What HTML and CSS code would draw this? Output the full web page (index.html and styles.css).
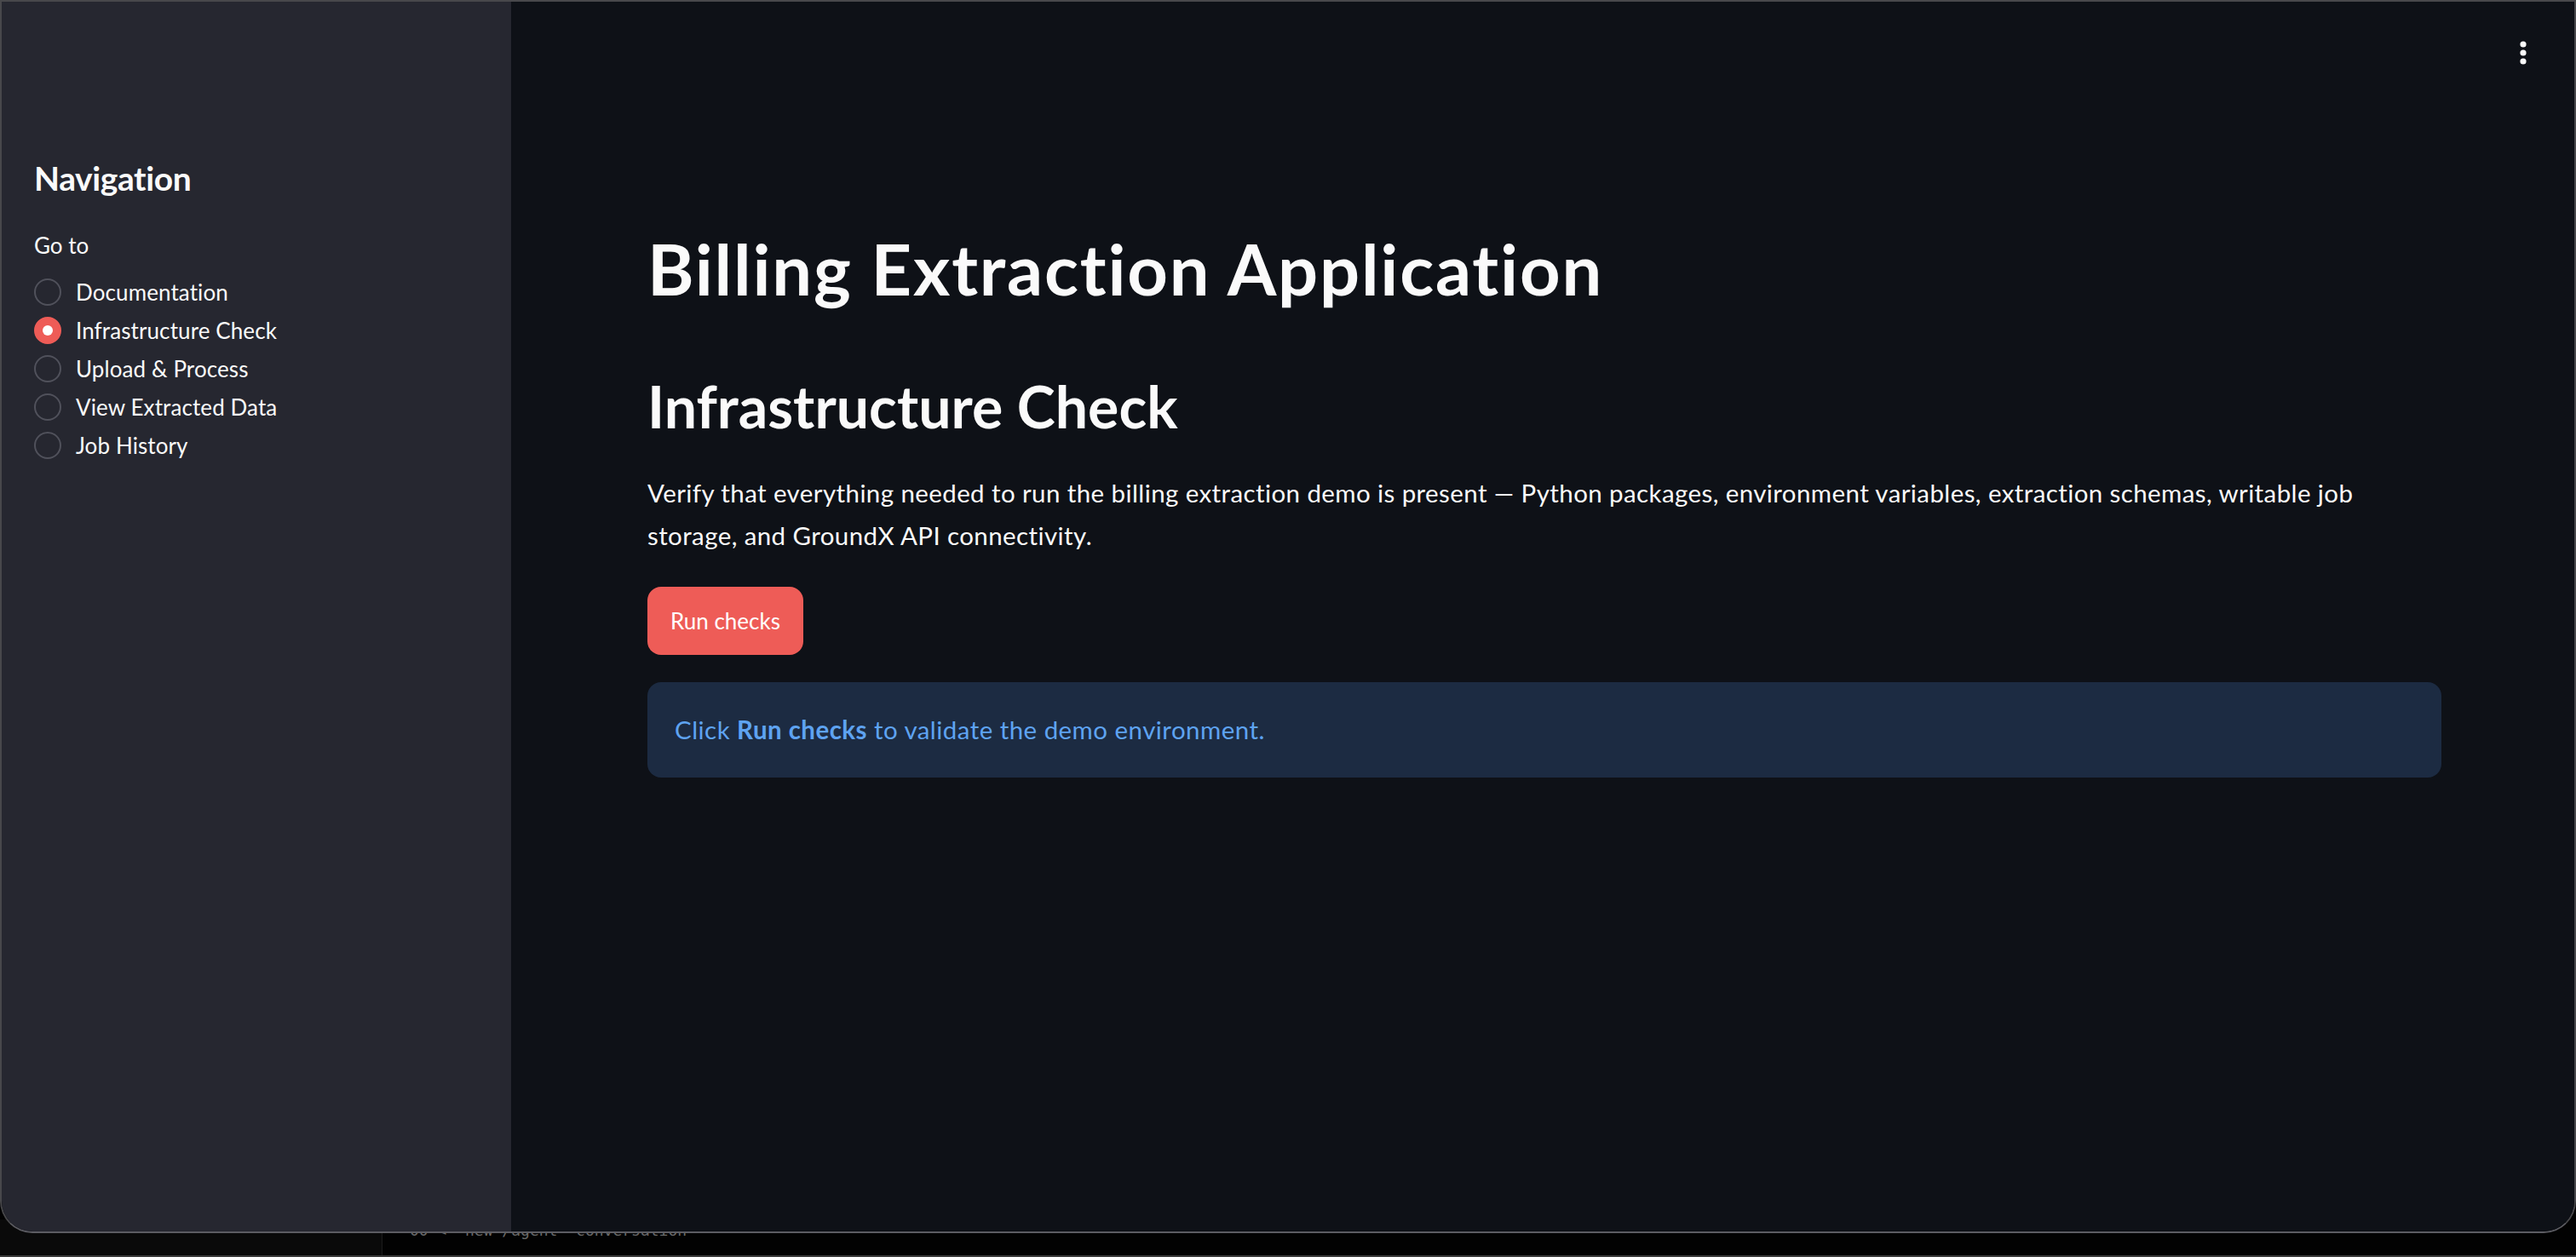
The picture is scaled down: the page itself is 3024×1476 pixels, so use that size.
FILE: index.html
```html
<!DOCTYPE html>
<html lang="en">
<head>
  <meta charset="UTF-8" />
  <meta name="viewport" content="width=device-width, initial-scale=1.0" />
  <title>Billing Extraction Application</title>
  <link rel="stylesheet" href="styles.css">
</head>
<body>
  <div class="window">
    <aside class="sidebar">
      <h2 class="side-title">Navigation</h2>
      <p class="field-label">Go to</p>
      <div class="radio-group">
        <label class="radio"><span class="radio-dot"></span>Documentation</label>
        <label class="radio checked"><span class="radio-dot"></span>Infrastructure Check</label>
        <label class="radio"><span class="radio-dot"></span>Upload &amp; Process</label>
        <label class="radio"><span class="radio-dot"></span>View Extracted Data</label>
        <label class="radio"><span class="radio-dot"></span>Job History</label>
      </div>
    </aside>

    <main class="main">
      <button class="menu-btn" title="Main menu">
        <svg width="8" height="28" viewBox="0 0 8 28">
          <circle cx="4" cy="4" r="3.6" />
          <circle cx="4" cy="14" r="3.6" />
          <circle cx="4" cy="24" r="3.6" />
        </svg>
      </button>

      <div class="block">
        <h1>Billing Extraction Application</h1>
        <h2>Infrastructure Check</h2>
        <p class="lead">Verify that everything needed to run the billing extraction demo is present — Python packages, environment variables, extraction schemas, writable job storage, and GroundX API connectivity.</p>
        <div><button class="btn-primary">Run checks</button></div>
        <div class="alert-info">Click <strong>Run checks</strong> to validate the demo environment.</div>
      </div>
    </main>
  </div>

  <div class="backdrop">
    <div class="backdrop-left"></div>
    <div class="backdrop-term">00 &lt;&nbsp;&nbsp;new /agent&nbsp;&nbsp;conversation</div>
  </div>
</body>
</html>
```

FILE: styles.css
```css
body {
  margin: 0;
  background: #020202;
  font-family: Lato, "Noto Sans", sans-serif;
  color: #fafafa;
  height: 1476px;
  overflow: hidden;
}

.window {
  position: relative;
  z-index: 1;
  display: flex;
  height: 1444px;
  border: 2px solid #48484b;
  border-bottom-color: #5c5c62;
  border-radius: 0 0 38px 38px;
  overflow: hidden;
}

/* sidebar */
.sidebar {
  width: 560px;
  flex-shrink: 0;
  background: #262730;
  padding: 182px 0 0 38px;
}
.side-title {
  margin: 0;
  font-size: 39px;
  line-height: 50px;
  font-weight: 700;
  letter-spacing: -0.4px;
}
.field-label {
  margin: 36px 0 0;
  font-size: 26px;
  line-height: 36px;
}
.radio-group {
  margin-top: 15px;
  display: flex;
  flex-direction: column;
}
.radio {
  display: flex;
  align-items: center;
  height: 44.8px;
  font-size: 26px;
  letter-spacing: 0.1px;
  gap: 17px;
}
.radio-dot {
  width: 28px;
  height: 28px;
  border: 2px solid #50515b;
  border-radius: 50%;
  display: flex;
  align-items: center;
  justify-content: center;
}
.radio.checked .radio-dot {
  background: #ee5c57;
  border-color: #ee5c57;
}
.radio.checked .radio-dot::after {
  content: "";
  width: 12px;
  height: 12px;
  border-radius: 50%;
  background: #fff;
}

/* main area */
.main {
  flex: 1;
  position: relative;
  background: #0e1117;
  padding: 263px 156px 0 160px;
}
.menu-btn {
  position: absolute;
  top: 46px;
  right: 56px;
  padding: 0;
  border: none;
  background: none;
  fill: #fafafa;
  line-height: 0;
}
.block h1 {
  margin: 0;
  font-size: 83px;
  line-height: 100px;
  font-weight: 700;
  letter-spacing: 1.8px;
}
.block h2 {
  margin: 69px 0 0;
  font-size: 68px;
  line-height: 86px;
  font-weight: 700;
}
.lead {
  margin: 34px 0 0;
  font-size: 29.5px;
  line-height: 50px;
  letter-spacing: 0.4px;
}
.btn-primary {
  margin-top: 35px;
  height: 80px;
  padding: 0 27px;
  border: none;
  border-radius: 16px;
  background: #ee5c57;
  color: #fff;
  font-family: inherit;
  font-size: 26px;
}
.alert-info {
  margin-top: 32px;
  padding: 31px 32px;
  border-radius: 16px;
  background: #1c2b42;
  color: #5ea3f1;
  font-size: 29.5px;
  line-height: 50px;
  letter-spacing: 0.45px;
}

/* other windows peeking out below */
.backdrop {
  display: flex;
  margin-top: -16px;
  height: 42px;
  border-bottom: 2px solid #3a3a3a;
}
.backdrop-left {
  width: 448px;
  background: #0a0a0a;
  border-right: 1px solid #1c1c1c;
}
.backdrop-term {
  padding: 0 0 0 32px;
  font-family: "DejaVu Sans Mono", monospace;
  font-size: 18px;
  line-height: 26px;
  color: #6a6a6a;
}
```
